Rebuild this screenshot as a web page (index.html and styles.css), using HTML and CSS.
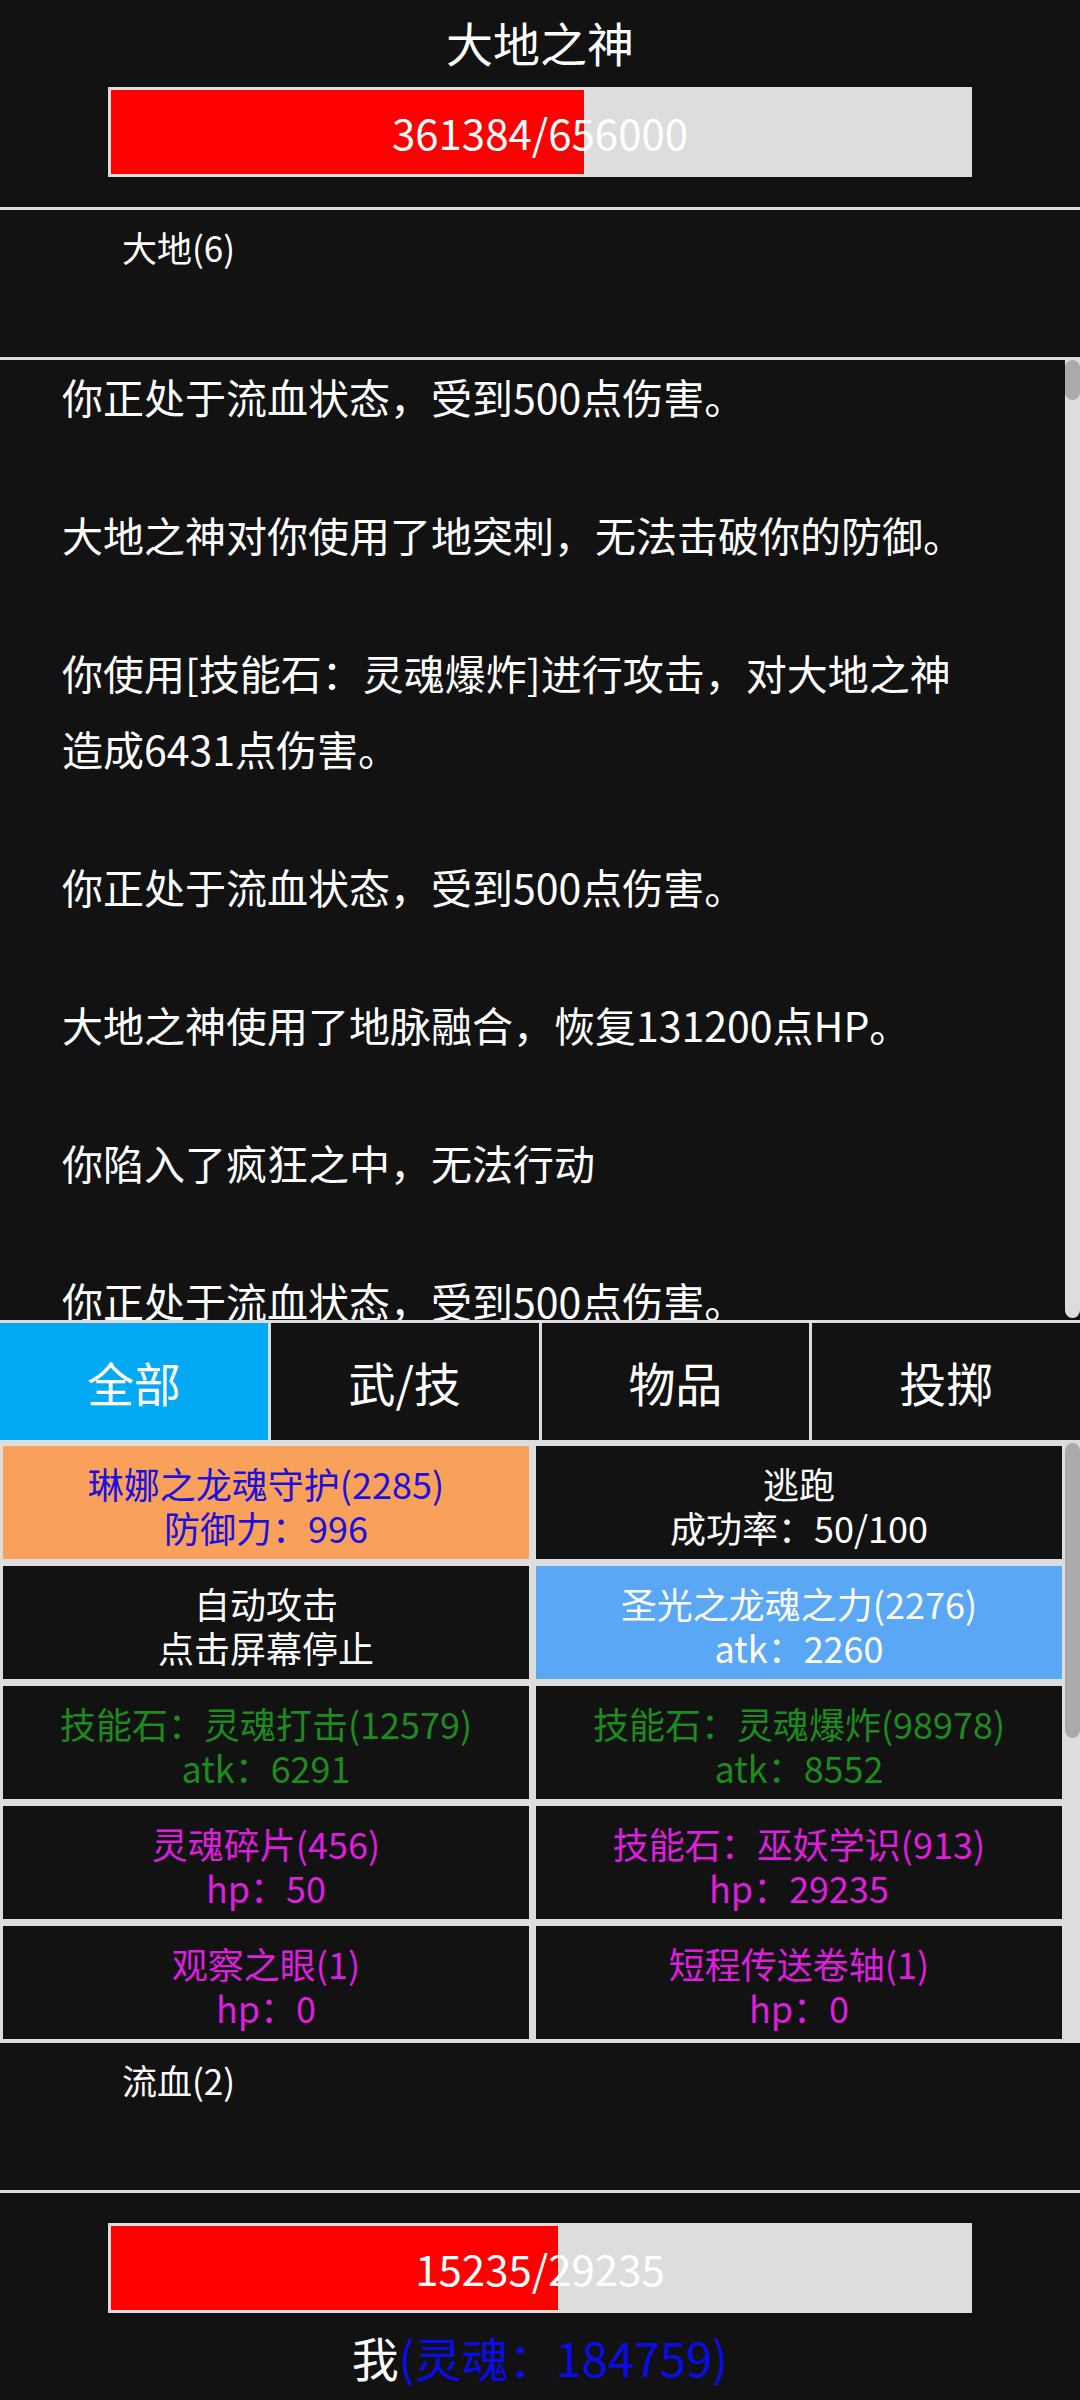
FILE: index.html
```html
<!DOCTYPE html>
<html>
<head>
  <meta charset="utf-8">
  <title>战斗</title>
  <link rel="stylesheet" href="styles.css">
</head>
<body>
  <div class="enemy">
    <div class="name">大地之神</div>
    <div class="hp-bar">
      <div class="fill" style="width: 55.09%;"></div>
      <div class="hp-text">361384/656000</div>
    </div>
  </div>

  <div class="line"></div>

  <div class="buffs">
    <span class="buff">大地(6)</span>
  </div>

  <div class="line"></div>

  <div class="log-wrap">
    <div class="log">
      <p>你正处于流血状态，受到500点伤害。</p>
      <p>大地之神对你使用了地突刺，无法击破你的防御。</p>
      <p>你使用[技能石：灵魂爆炸]进行攻击，对大地之神造成6431点伤害。</p>
      <p>你正处于流血状态，受到500点伤害。</p>
      <p>大地之神使用了地脉融合，恢复131200点HP。</p>
      <p>你陷入了疯狂之中，无法行动</p>
      <p>你正处于流血状态，受到500点伤害。</p>
    </div>
    <div class="scroll-track log-track">
      <div class="thumb log-thumb"></div>
    </div>
  </div>

  <div class="line"></div>

  <div class="tabs">
    <div class="tab active">全部</div>
    <div class="tab">武/技</div>
    <div class="tab">物品</div>
    <div class="tab">投掷</div>
  </div>

  <div class="actions-wrap">
    <div class="actions">
      <div class="cell orange">
        <span>琳娜之龙魂守护(2285)</span>
        <span>防御力：996</span>
      </div>
      <div class="cell">
        <span>逃跑</span>
        <span>成功率：50/100</span>
      </div>
      <div class="cell">
        <span>自动攻击</span>
        <span>点击屏幕停止</span>
      </div>
      <div class="cell sky">
        <span>圣光之龙魂之力(2276)</span>
        <span>atk：2260</span>
      </div>
      <div class="cell green">
        <span>技能石：灵魂打击(12579)</span>
        <span>atk：6291</span>
      </div>
      <div class="cell green">
        <span>技能石：灵魂爆炸(98978)</span>
        <span>atk：8552</span>
      </div>
      <div class="cell pink">
        <span>灵魂碎片(456)</span>
        <span>hp：50</span>
      </div>
      <div class="cell pink">
        <span>技能石：巫妖学识(913)</span>
        <span>hp：29235</span>
      </div>
      <div class="cell pink">
        <span>观察之眼(1)</span>
        <span>hp：0</span>
      </div>
      <div class="cell pink">
        <span>短程传送卷轴(1)</span>
        <span>hp：0</span>
      </div>
    </div>
    <div class="scroll-track grid-track">
      <div class="thumb grid-thumb"></div>
    </div>
  </div>

  <div class="buffs">
    <span class="buff">流血(2)</span>
  </div>

  <div class="line"></div>

  <div class="player">
    <div class="hp-bar">
      <div class="fill" style="width: 52.11%;"></div>
      <div class="hp-text">15235/29235</div>
    </div>
    <div class="me">我<span class="soul">(灵魂：184759)</span></div>
  </div>
</body>
</html>
```

FILE: styles.css
```css
body {
  margin: 0;
  width: 1080px;
  height: 2400px;
  overflow: hidden;
  background-color: #121212;
  color: #fff;
  font-family: "Noto Sans CJK SC", "Noto Sans", sans-serif;
}

.line {
  height: 3px;
  background-color: #dddddd;
}

/* enemy header */
.enemy {
  height: 207px;
  padding-top: 10px;
  box-sizing: border-box;
}

.name, .me {
  font-size: 47px;
  line-height: 64px;
  text-align: center;
}

.hp-bar {
  width: 864px;
  height: 90px;
  margin: 0 auto;
  padding: 3px;
  box-sizing: border-box;
  background-color: #dddddd;
  display: grid;
}

.name + .hp-bar {
  margin-top: 13px;
}

.hp-bar .fill,
.hp-bar .hp-text {
  grid-area: 1 / 1;
}

.hp-bar .fill {
  background-color: #ff0000;
  height: 100%;
}

.hp-text {
  font-size: 42px;
  line-height: 84px;
  text-align: center;
  color: #fff;
}

/* buff rows */
.buffs {
  height: 147px;
  padding: 12px 0 0 122px;
  box-sizing: border-box;
}

.buff {
  font-size: 35px;
  line-height: 50px;
}

/* battle log */
.log-wrap {
  height: 960px;
  display: flex;
  overflow: hidden;
}

.log {
  flex: 1;
  padding-left: 62px;
  margin-top: -2px;
  font-size: 41px;
  line-height: 76px;
}

.log p {
  margin: 0 0 62px;
  width: 22.3em;
}

.scroll-track {
  width: 15px;
  background-color: #dddddd;
  border-radius: 0 0 8px 8px;
}

.log-track {
  height: 958px;
}

.thumb {
  background-color: #aaaaaa;
  border-radius: 8px;
}

.log-thumb {
  height: 40px;
}

/* tabs */
.tabs {
  display: grid;
  grid-template-columns: repeat(4, 1fr);
  gap: 3px;
  background-color: #dddddd;
}

.tab {
  height: 117px;
  display: flex;
  align-items: center;
  justify-content: center;
  font-size: 47px;
  background-color: #121212;
}

.tab.active {
  background-color: #03a9f4;
}

/* actions */
.actions-wrap {
  display: flex;
  background-color: #dddddd;
  padding: 6px 0 4px 3px;
}

.actions {
  width: 1059px;
  display: grid;
  grid-template-columns: 1fr 1fr;
  grid-auto-rows: 113px;
  gap: 7px;
}

.cell {
  background-color: #121212;
  color: #fff;
  display: flex;
  flex-direction: column;
  align-items: center;
  justify-content: center;
  padding-top: 4px;
  box-sizing: border-box;
  font-size: 36px;
  line-height: 44px;
}

.cell span {
  display: block;
  height: 44px;
}

.cell.orange {
  background-color: #f9a05a;
  color: #1c10dc;
}

.cell.sky {
  background-color: #5aa8f5;
}

.cell.green {
  color: #1d8b1d;
}

.cell.pink {
  color: #dd1fdd;
}

.grid-track {
  margin: -3px 0 -2px 3px;
}

.grid-thumb {
  height: 295px;
}

/* player */
.player {
  padding-top: 30px;
}

.me {
  margin-top: 12px;
}

.soul {
  color: #0c0ce6;
}
```
